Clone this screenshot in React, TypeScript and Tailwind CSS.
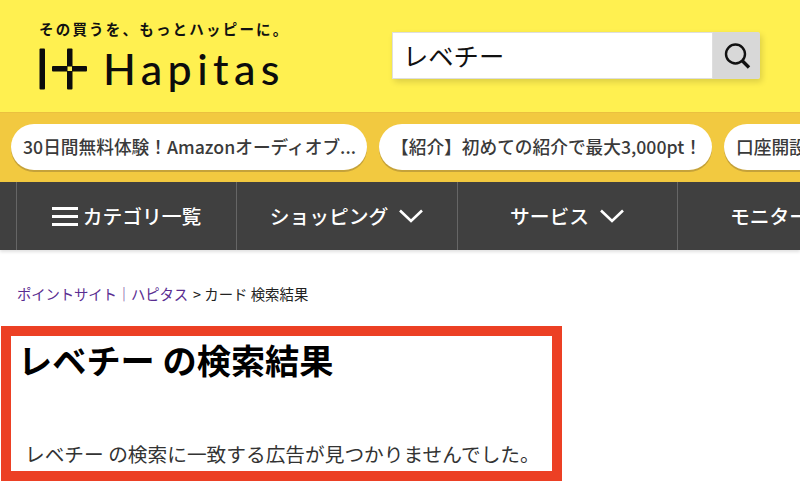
import React from 'react'

const pills = [
  { text: '30日間無料体験！Amazonオーディオブ...', width: 'w-[356px]' },
  { text: '【紹介】初めての紹介で最大3,000pt！', width: 'w-[333px]' },
  { text: '口座開設で最大10,000pt！', width: 'w-[300px]' },
]

function Chevron() {
  return (
    <svg width="26" height="16" viewBox="0 0 26 16" fill="none" stroke="#fff" strokeWidth="2.6" className="ml-2.5 shrink-0">
      <path d="M2 2.5 L13 13 L24 2.5" />
    </svg>
  )
}

function LogoMark() {
  return (
    <svg width="48" height="42" viewBox="0 0 48 42" fill="#0c0c0c" className="shrink-0">
      <rect x="0.5" y="0.5" width="5.5" height="41" rx="1" />
      <rect x="28" y="0.5" width="5.5" height="41" rx="1" />
      <rect x="13" y="18" width="35" height="5.5" rx="1" />
      <rect x="28.5" y="18.5" width="4.5" height="4.5" fill="#fff050" />
    </svg>
  )
}

export default function App() {
  return (
    <div className="w-[800px] h-[490px] overflow-hidden bg-white font-['Noto_Sans_CJK_JP',sans-serif]">
      <header className="h-[112px] bg-[#fff050] flex">
        <div className="pl-[39px] pt-[17px] w-[392px] shrink-0">
          <div className="text-[14.5px] leading-[24px] font-bold text-[#111] tracking-[2.2px] whitespace-nowrap">
            その買うを、もっとハッピーに。
          </div>
          <div className="flex items-center mt-[7px] h-[42px]">
            <LogoMark />
            <span className="ml-[16px] font-['Lato',sans-serif] font-medium text-[43px] leading-[42px] text-[#0c0c0c] tracking-[5.4px]">
              Hapitas
            </span>
          </div>
        </div>
        <div className="mt-[32px] w-[368px] h-[47px] flex rounded-[2px] shadow-[2px_3px_6px_rgba(0,0,0,0.14)]">
          <div className="flex-1 bg-white border border-[#dedede] pl-[10px] text-[25.3px] leading-[44px] text-[#111]">
            レベチー
          </div>
          <div className="w-[47px] bg-[#d8d8d8] rounded-r-[2px] flex items-center justify-center">
            <svg width="28" height="28" viewBox="0 0 28 28" fill="none" stroke="#111" strokeWidth="2.4">
              <circle cx="12.5" cy="12" r="9.5" />
              <path d="M19.5 19 L26 25.5" strokeWidth="3.4" />
            </svg>
          </div>
        </div>
      </header>

      <div className="h-[70px] bg-[#f2c940] border-t border-[#ebc03f] flex gap-3 pl-[11px] pt-[11px] overflow-hidden">
        {pills.map((pill) => (
          <div
            key={pill.text}
            className={`${pill.width} h-[46px] shrink-0 rounded-[23px] bg-white shadow-[0_2px_0_#c5a23a] pl-3 text-[17.7px] leading-[44px] font-medium text-[#3a3a3a] whitespace-nowrap overflow-hidden`}
          >
            {pill.text}
          </div>
        ))}
      </div>

      <nav className="h-[68px] bg-[#404040] flex pl-4 overflow-hidden shadow-[0_2px_3px_rgba(0,0,0,0.12)] text-white text-[19.8px] font-medium">
        <div className="w-[220px] shrink-0 border-l border-[#666] flex items-center justify-center">
          <span className="flex flex-col gap-[5px] mr-[5px]">
            <span className="block w-[26px] h-[3px] bg-white" />
            <span className="block w-[26px] h-[3px] bg-white" />
            <span className="block w-[26px] h-[3px] bg-white" />
          </span>
          カテゴリ一覧
        </div>
        <div className="w-[221px] shrink-0 border-l border-[#666] flex items-center justify-center">
          ショッピング
          <Chevron />
        </div>
        <div className="w-[220px] shrink-0 border-l border-[#666] flex items-center justify-center">
          サービス
          <Chevron />
        </div>
        <div className="w-[220px] shrink-0 border-l border-[#666] flex items-center justify-center">
          モニター
          <Chevron />
        </div>
      </nav>

      <div className="pl-[17px] pt-[34px] text-[14.4px] leading-[20px] text-[#222]">
        <span className="text-[#5a2d91] tracking-[-0.15px]">ポイントサイト｜ハピタス</span>
        <span className="ml-[2px]"> &gt; カード 検索結果</span>
      </div>

      <main className="ml-[1px] mt-[22px] w-[561px] h-[155px] border-[10px] border-[#ec4024]">
        <h1 className="text-[34.2px] leading-[46px] font-bold text-black pl-[7px]">レベチー の検索結果</h1>
        <p className="text-[19.7px] leading-[28px] text-[#333] pl-[14px] mt-[58px] whitespace-nowrap">
          レベチー の検索に一致する広告が見つかりませんでした。
        </p>
      </main>
    </div>
  )
}
